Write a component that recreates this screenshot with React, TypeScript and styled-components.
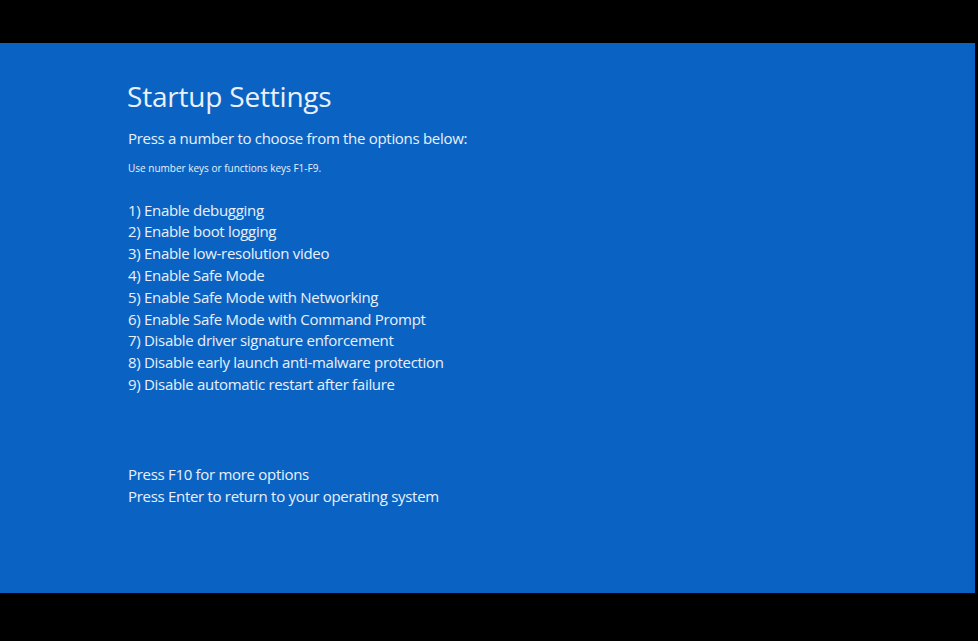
import styled, { createGlobalStyle } from "styled-components";

const GlobalStyle = createGlobalStyle`
  html, body {
    margin: 0;
    padding: 0;
    background: #000;
  }
  body {
    font-family: "Open Sans", "Noto Sans", sans-serif;
  }
`;

const Frame = styled.div`
  width: 978px;
  height: 641px;
  background: #000;
  padding: 43px 3px 48px 0;
  box-sizing: border-box;
  display: flex;
`;

const BlueScreen = styled.main`
  flex: 1;
  background: #0a63c3;
  color: #eaf0fa;
  padding: 35px 0 0 127px;
  display: flex;
  flex-direction: column;
`;

const Title = styled.h1`
  margin: 0;
  font-size: 28px;
  font-weight: 400;
  line-height: 36px;
  letter-spacing: -0.2px;
`;

const Line = styled.div<{ $size?: number; $top?: number }>`
  font-size: ${(p) => p.$size ?? 15}px;
  line-height: 21.8px;
  margin-top: ${(p) => p.$top ?? 0}px;
  padding-left: 1px;
  letter-spacing: ${(p) => (p.$size ? 0 : -0.3)}px;
`;

const options = [
  "1) Enable debugging",
  "2) Enable boot logging",
  "3) Enable low-resolution video",
  "4) Enable Safe Mode",
  "5) Enable Safe Mode with Networking",
  "6) Enable Safe Mode with Command Prompt",
  "7) Disable driver signature enforcement",
  "8) Disable early launch anti-malware protection",
  "9) Disable automatic restart after failure",
];

const App = () => (
  <>
    <GlobalStyle />
    <Frame>
      <BlueScreen>
        <Title>Startup Settings</Title>
        <Line $top={14}>Press a number to choose from the options below:</Line>
        <Line $size={10} $top={8}>Use number keys or functions keys F1-F9.</Line>
        <Line $top={20}>
          {options.map((o) => (
            <div key={o}>{o}</div>
          ))}
        </Line>
        <Line $top={68}>
          <div>Press F10 for more options</div>
          <div>Press Enter to return to your operating system</div>
        </Line>
      </BlueScreen>
    </Frame>
  </>
);

export default App;
